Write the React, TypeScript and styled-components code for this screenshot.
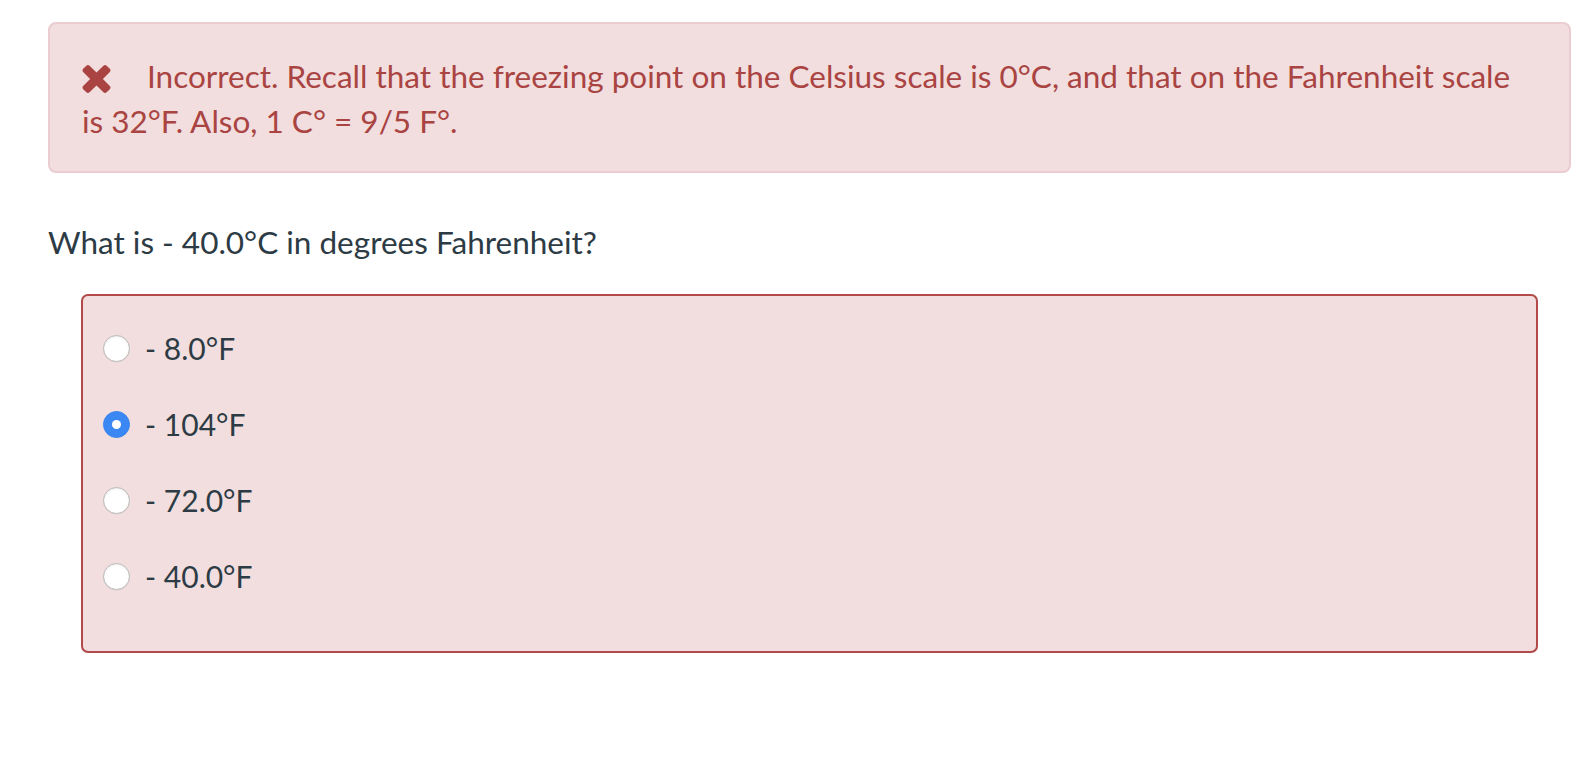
import React from "react";
import styled, { createGlobalStyle } from "styled-components";

const GlobalStyle = createGlobalStyle`
  html, body {
    margin: 0;
    padding: 0;
    background: #ffffff;
  }
  body {
    font-family: Lato, "Open Sans", "Liberation Sans", sans-serif;
    -webkit-font-smoothing: antialiased;
  }
`;

const Page = styled.main`
  padding: 22px 15px 40px 48px;
`;

const Alert = styled.div`
  background: #f2dede;
  border: 2px solid #ebccd1;
  border-radius: 8px;
  color: #a94442;
  font-size: 31.5px;
  line-height: 45px;
  padding: 30px 32px 27px;
`;

const AlertIcon = styled.svg`
  display: inline-block;
  width: 29px;
  height: 28px;
  margin-right: 36px;
  vertical-align: -5px;
  fill: #a94442;
`;

const Question = styled.p`
  margin: 47px 0 29px;
  color: #2d3b45;
  font-size: 31.5px;
  line-height: 45px;
`;

const Answers = styled.fieldset`
  margin: 0 33px;
  padding: 14px 18px 37px;
  border: 2px solid #b24a4a;
  border-radius: 7px;
  background: #f2dede;
  min-width: 0;
`;

const Row = styled.label`
  display: flex;
  align-items: center;
  height: 76px;
  color: #2d3b45;
  font-size: 30px;
  cursor: pointer;
`;

const Radio = styled.input.attrs({ type: "radio" })`
  appearance: none;
  -webkit-appearance: none;
  margin: 0 15px 0 2px;
  width: 27px;
  height: 27px;
  border-radius: 50%;
  flex: none;
  box-sizing: border-box;
  background: #ffffff;
  border: 1px solid #b9b9b9;
  box-shadow: inset 0 1px 2px rgba(0, 0, 0, 0.08), 0 0.5px 0.5px rgba(0,0,0,0.06);
  position: relative;

  &:checked {
    background: #3b88f5;
    border-color: #3a84ec;
    box-shadow: none;
  }
  &:checked::after {
    content: "";
    position: absolute;
    left: 50%;
    top: 50%;
    width: 9px;
    height: 9px;
    margin: -4.5px 0 0 -4.5px;
    border-radius: 50%;
    background: #ffffff;
  }
`;

const options = ["- 8.0°F", "- 104°F", "- 72.0°F", "- 40.0°F"];

export default function App() {
  return (
    <>
      <GlobalStyle />
      <Page>
        <Alert role="alert">
          <AlertIcon viewBox="302 366 1188 1188" aria-hidden="true">
            <path d="M1490 1322q0 40-28 68l-136 136q-28 28-68 28t-68-28l-294-294-294 294q-28 28-68 28t-68-28l-136-136q-28-28-28-68t28-68l294-294-294-294q-28-28-28-68t28-68l136-136q28-28 68-28t68 28l294 294 294-294q28-28 68-28t68 28l136 136q28 28 28 68t-28 68l-294 294 294 294q28 28 28 68z" />
          </AlertIcon>
          Incorrect. Recall that the freezing point on the Celsius scale is 0°C, and that on the Fahrenheit scale is 32°F. Also, 1 C° = 9/5 F°.
        </Alert>
        <Question>What is - 40.0°C in degrees Fahrenheit?</Question>
        <Answers>
          {options.map((o, i) => (
            <Row key={o}>
              <Radio name="answer" defaultChecked={i === 1} />
              {o}
            </Row>
          ))}
        </Answers>
      </Page>
    </>
  );
}
